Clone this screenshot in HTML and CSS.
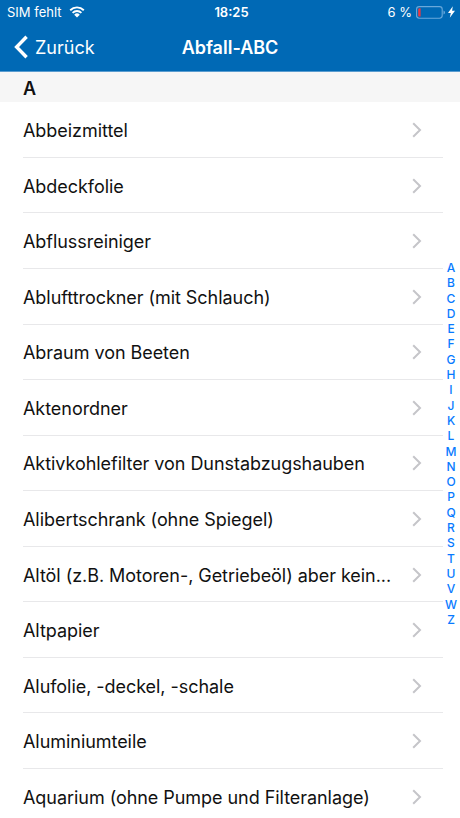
FILE: index.html
```html
<!DOCTYPE html>
<html lang="de">
<head>
    <meta charset="UTF-8">
    <meta name="viewport" content="width=device-width, initial-scale=1.0">
    <title>Abfall-ABC</title>
    <link rel="stylesheet" href="styles.css">
</head>
<body>
    <header>
        <div class="status-bar">
            <div class="carrier">
                <span>SIM fehlt</span>
                <svg class="wifi" viewBox="0 0 16 12" width="16" height="12">
                    <path d="M1.2 4.2a9.7 9.7 0 0 1 13.6 0M3.6 6.8a6.2 6.2 0 0 1 8.8 0" fill="none" stroke="#fff" stroke-width="1.9"/>
                    <path d="M5.2 8.7a4 4 0 0 1 5.6 0L8 11.6z" fill="#fff"/>
                </svg>
            </div>
            <span class="clock">18:25</span>
            <div class="power">
                <span>6 %</span>
                <svg class="battery" viewBox="0 0 30 13" width="30" height="13">
                    <rect x="0.6" y="0.6" width="25.6" height="11.6" rx="2.6" fill="none" stroke="#6aa9db" stroke-width="1.1"/>
                    <path d="M4.6 2.2v8.4H3.4a1.2 1.2 0 0 1-1.2-1.2v-6a1.2 1.2 0 0 1 1.2-1.2z" fill="#ee3840"/>
                    <path d="M27.5 4.4q1.5.6 1.5 2t-1.5 2z" fill="#6aa9db"/>
                </svg>
                <svg class="bolt" viewBox="0 0 7 12" width="7" height="12">
                    <path d="M4.8 0.2L0 6.9h2.8L1.8 11.8 7 4.7H4.1z" fill="#fff"/>
                </svg>
            </div>
        </div>
        <nav>
            <a class="back">
                <svg viewBox="0 0 15 24" width="15" height="24">
                    <path d="M12.6 1.8L2.6 12l10 10.2" fill="none" stroke="#fff" stroke-width="3.4"/>
                </svg>
                <span>Zurück</span>
            </a>
            <h1>Abfall-ABC</h1>
        </nav>
    </header>

    <h2>A</h2>
    <ul class="list" id="wasteList"></ul>
    <div class="index" id="letterIndex"></div>

    <script>
        const items = [
            "Abbeizmittel",
            "Abdeckfolie",
            "Abflussreiniger",
            "Ablufttrockner (mit Schlauch)",
            "Abraum von Beeten",
            "Aktenordner",
            "Aktivkohlefilter von Dunstabzugshauben",
            "Alibertschrank (ohne Spiegel)",
            "Altöl (z.B. Motoren-, Getriebeöl) aber kein...",
            "Altpapier",
            "Alufolie, -deckel, -schale",
            "Aluminiumteile",
            "Aquarium (ohne Pumpe und Filteranlage)"
        ];

        // Waste entries
        const list = document.getElementById("wasteList");
        items.forEach(item => {
            list.innerHTML += `
                <li>
                    <span>${item}</span>
                    <svg viewBox="0 0 10 16" width="10" height="16">
                        <path d="M1.2 1.3L8 8l-6.8 6.7" fill="none" stroke="#c5c5c9" stroke-width="2"/>
                    </svg>
                </li>
            `;
        });

        // Letters on the right edge
        const index = document.getElementById("letterIndex");
        "ABCDEFGHIJKLMNOPQRSTUVWZ".split("").forEach(letter => {
            index.innerHTML += `<span>${letter}</span>`;
        });
    </script>
</body>
</html>
```
FILE: styles.css
```css
/* General Styles */
* {
    margin: 0;
    padding: 0;
    box-sizing: border-box;
    font-family: Inter, "Liberation Sans", sans-serif;
}

body {
    position: relative;
    height: 818px;
    background-color: #fff;
    color: #111;
    overflow: hidden;
}

svg {
    display: block;
    flex-shrink: 0;
}

/* Header */
header {
    height: 72px;
    background-color: #0069b5;
    border-bottom: 1px solid #5a9ccf;
    color: #fff;
}

.status-bar {
    display: grid;
    grid-template-columns: 1fr auto 1fr;
    align-items: center;
    height: 24px;
    padding: 0 5px 0 7px;
    font-size: 13px;
}

.carrier, .power {
    display: flex;
    align-items: center;
}

.carrier {
    gap: 7px;
}

.power {
    justify-content: flex-end;
}

.battery {
    margin-left: 4px;
}

.bolt {
    margin-left: 2px;
}

.clock {
    padding-left: 1px;
    font-weight: 600;
}

nav {
    display: grid;
    grid-template-columns: 1fr auto 1fr;
    align-items: center;
    height: 46px;
    padding: 0 14px;
}

.back {
    display: flex;
    align-items: center;
    gap: 6px;
    font-size: 18px;
}

h1 {
    font-size: 18px;
    font-weight: 600;
}

/* Section title */
h2 {
    height: 30.4px;
    padding-left: 23px;
    background-color: #f6f6f6;
    font-size: 18px;
    font-weight: 600;
    line-height: 33px;
}

/* List */
.list {
    list-style: none;
    padding: 0 17px 0 23px;
}

.list li {
    display: flex;
    align-items: center;
    justify-content: space-between;
    height: 55.55px;
    padding-right: 21px;
    border-bottom: 1px solid #e8e8ea;
    font-size: 18px;
    letter-spacing: -0.05px;
    white-space: nowrap;
}

.list span {
    padding-top: 2px;
}

.list svg {
    margin-top: 1px;
}

/* Letter index */
.index {
    position: absolute;
    top: 260px;
    right: 0;
    width: 18px;
    display: flex;
    flex-direction: column;
    text-align: center;
    color: #087aff;
    font-size: 12px;
    font-weight: 500;
    line-height: 15.3px;
}
```
